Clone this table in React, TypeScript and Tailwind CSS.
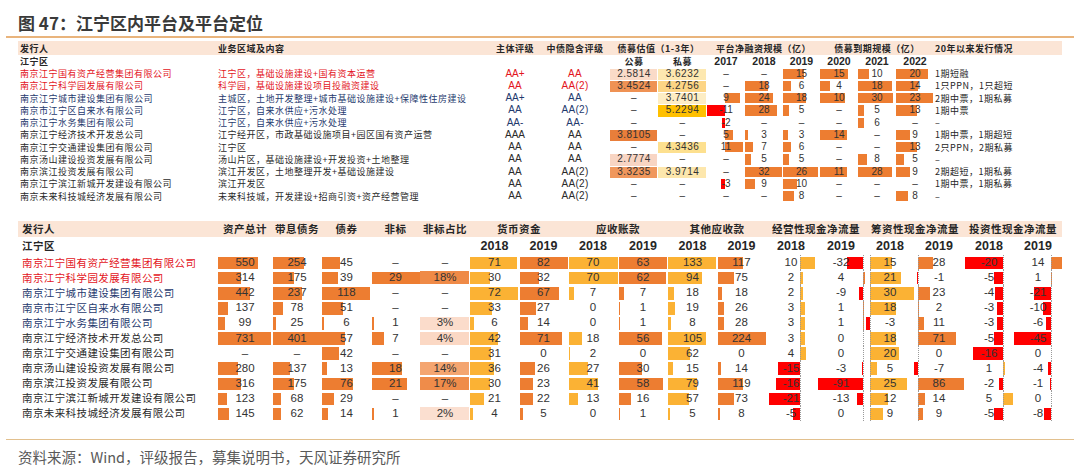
import React from 'react';

type Tone = 'red' | 'navy' | 'dark';
const toneClass = (t: Tone) =>
  t === 'red' ? 'text-[#e3141c]' : t === 'navy' ? 'text-[#1f3a6e]' : 'text-[#2a2a2a]';

const CJK = "font-['Noto_Sans_CJK_SC',sans-serif]";
const NUM = "font-['Liberation_Sans_Narrow','Liberation_Sans','Noto_Sans_CJK_SC',sans-serif]";

const TOP_GRID = 'grid grid-cols-[198px_274px_50px_70px_48px_49px_38px_38px_37px_38px_38px_38px_128px]';
const BOT_GRID =
  'grid grid-cols-[200px_54px_50px_49px_49px_50px_49px_49px_50px_50px_49px_49px_50px_50px_48px_50px_50px_48px]';

type TopRow = {
  name: string;
  biz: string;
  r1: string;
  r2: string;
  pub: [string, string | null];
  pri: [string, string | null];
  y17: [string, number];
  bars: [string, number][];
  note: string;
  tone: Tone;
};

const topRows: TopRow[] = [
  { name: '南京江宁国有资产经营集团有限公司', biz: '江宁区，基础设施建设+国有资本运营', r1: 'AA+', r2: 'AA', pub: ['2.5814', '#fadbc8'], pri: ['3.6232', '#fde8b0'], y17: ['–', 0], bars: [['–', 0], ['15', 21], ['15', 28], ['10', 11], ['20', 32]], note: '1期短融', tone: 'red' },
  { name: '南京江宁科学园发展有限公司', biz: '科学园，基础设施建设项目投融资建设', r1: 'AA', r2: 'AA(2)', pub: ['3.4524', '#ef9254'], pri: ['4.2756', '#fdd585'], y17: ['–', 0], bars: [['18', 23], ['6', 8], ['4', 10], ['18', 34], ['14', 22]], note: '1只PPN，1只超短', tone: 'red' },
  { name: '南京江宁城市建设集团有限公司', biz: '主城区，土地开发整理+城市基础设施建设+保障性住房建设', r1: 'AA+', r2: 'AA', pub: ['–', null], pri: ['3.7401', '#fdedc4'], y17: ['9', 15], bars: [['24', 28], ['18', 23], ['10', 25], ['30', 35], ['23', 37]], note: '2期中票，1期私募', tone: 'navy' },
  { name: '南京市江宁区自来水有限公司', biz: '江宁区，自来水供应+污水处理', r1: 'AA', r2: 'AA(2)', pub: ['–', null], pri: ['5.2294', '#ffc000'], y17: ['-11', -18], bars: [['28', 32], ['5', 6], ['–', 0], ['5', 6], ['13', 21]], note: '1期中票', tone: 'navy' },
  { name: '南京江宁水务集团有限公司', biz: '江宁区，自来水供应+污水处理', r1: 'AA-', r2: 'AA-', pub: ['–', null], pri: ['–', null], y17: ['-2', -3], bars: [['–', 0], ['–', 0], ['–', 0], ['6', 6], ['–', 0]], note: '–', tone: 'navy' },
  { name: '南京江宁经济技术开发总公司', biz: '江宁经开区，市政基础设施项目+园区国有资产运营', r1: 'AAA', r2: 'AA', pub: ['3.8105', '#e97e3a'], pri: ['–', null], y17: ['5', 8], bars: [['3', 3], ['3', 5], ['14', 27], ['–', 0], ['9', 14]], note: '1期中票，1期超短', tone: 'dark' },
  { name: '南京江宁交通建设集团有限公司', biz: '江宁区', r1: 'AA', r2: 'AA', pub: ['–', null], pri: ['4.3436', '#fde08f'], y17: ['11', 18], bars: [['7', 8], ['6', 8], ['–', 0], ['–', 0], ['13', 21]], note: '2只PPN，2期私募', tone: 'dark' },
  { name: '南京汤山建设投资发展有限公司', biz: '汤山片区，基础设施建设+开发投资+土地整理', r1: 'AA', r2: 'AA', pub: ['2.7774', '#f8d5c3'], pri: ['–', null], y17: ['–', 0], bars: [['5', 6], ['5', 6], ['–', 0], ['8', 9], ['5', 8]], note: '–', tone: 'dark' },
  { name: '南京滨江投资发展有限公司', biz: '滨江开发区，土地整理开发+基础设施建设', r1: 'AA', r2: 'AA(2)', pub: ['3.3235', '#f0975c'], pri: ['3.9714', '#fde7ad'], y17: ['–', 0], bars: [['32', 37], ['26', 35], ['11', 27], ['28', 34], ['9', 14]], note: '2期超短，1期私募', tone: 'dark' },
  { name: '南京江宁滨江新城开发建设有限公司', biz: '滨江开发区', r1: 'AA', r2: 'AA(2)', pub: ['–', null], pri: ['–', null], y17: ['-3', -4], bars: [['9', 10], ['10', 14], ['–', 0], ['–', 0], ['–', 0]], note: '1期中票，1期私募', tone: 'dark' },
  { name: '南京未来科技城经济发展有限公司', biz: '未来科技城，开发建设+招商引资+资产经营管理', r1: 'AA', r2: 'AA(2)', pub: ['–', null], pri: ['–', null], y17: ['–', 0], bars: [['–', 0], ['8', 11], ['–', 0], ['–', 0], ['8', 12]], note: '–', tone: 'dark' },
];

type Col =
  | { kind: 'bar'; scale: number; start: number; color: 'o' | 'y' }
  | { kind: 'heat' }
  | { kind: 'flow'; axis: number; scale: number; color: 'o' | 'y' };

const cols: Col[] = [
  { kind: 'bar', scale: 0.0725, start: 0, color: 'o' },
  { kind: 'bar', scale: 0.122, start: 1, color: 'o' },
  { kind: 'bar', scale: 0.407, start: 0, color: 'o' },
  { kind: 'bar', scale: 1.655, start: 1, color: 'o' },
  { kind: 'heat' },
  { kind: 'bar', scale: 0.667, start: 0, color: 'y' },
  { kind: 'bar', scale: 0.585, start: 1, color: 'o' },
  { kind: 'bar', scale: 0.7, start: 1, color: 'y' },
  { kind: 'bar', scale: 0.762, start: 1, color: 'o' },
  { kind: 'bar', scale: 0.361, start: 0, color: 'y' },
  { kind: 'bar', scale: 0.214, start: 1, color: 'o' },
  { kind: 'flow', axis: 34, scale: 1.5, color: 'y' },
  { kind: 'flow', axis: 47, scale: 0.5, color: 'o' },
  { kind: 'flow', axis: 4, scale: 1.47, color: 'y' },
  { kind: 'flow', axis: 4, scale: 0.535, color: 'o' },
  { kind: 'flow', axis: 39, scale: 1.9, color: 'y' },
  { kind: 'flow', axis: 37, scale: 0.82, color: 'o' },
];

type BotRow = { name: string; tone: Tone; v: string[]; heat: string | null };

const botRows: BotRow[] = [
  { name: '南京江宁国有资产经营集团有限公司', tone: 'red', heat: null, v: ['550', '254', '45', '–', '–', '71', '82', '70', '63', '133', '117', '10', '-32', '15', '28', '-20', '14'] },
  { name: '南京江宁科学园发展有限公司', tone: 'red', heat: '#ef8a47', v: ['314', '175', '39', '29', '18%', '30', '32', '70', '62', '94', '75', '2', '4', '21', '-1', '-5', '1'] },
  { name: '南京江宁城市建设集团有限公司', tone: 'navy', heat: null, v: ['442', '237', '118', '–', '–', '72', '67', '7', '7', '18', '18', '2', '-9', '30', '23', '-4', '-21'] },
  { name: '南京市江宁区自来水有限公司', tone: 'navy', heat: null, v: ['137', '78', '51', '–', '–', '33', '27', '0', '1', '19', '26', '3', '1', '18', '2', '-3', '-10'] },
  { name: '南京江宁水务集团有限公司', tone: 'navy', heat: '#fbdccb', v: ['99', '25', '6', '1', '3%', '6', '14', '0', '1', '8', '28', '3', '1', '-3', '11', '-3', '-6'] },
  { name: '南京江宁经济技术开发总公司', tone: 'dark', heat: '#fbd8c4', v: ['731', '401', '57', '7', '4%', '42', '71', '18', '56', '105', '224', '3', '0', '18', '71', '-5', '-45'] },
  { name: '南京江宁交通建设集团有限公司', tone: 'dark', heat: null, v: ['–', '–', '42', '–', '–', '31', '0', '2', '0', '62', '0', '4', '0', '20', '0', '-16', '0'] },
  { name: '南京汤山建设投资发展有限公司', tone: 'dark', heat: '#f4a570', v: ['280', '137', '13', '18', '14%', '36', '26', '27', '30', '15', '14', '-15', '-3', '5', '-7', '1', '-4'] },
  { name: '南京滨江投资发展有限公司', tone: 'dark', heat: '#ef8c4a', v: ['316', '175', '76', '21', '17%', '30', '23', '41', '58', '79', '119', '-16', '-91', '25', '86', '-2', '-1'] },
  { name: '南京江宁滨江新城开发建设有限公司', tone: 'dark', heat: null, v: ['123', '68', '29', '–', '–', '21', '22', '13', '16', '57', '73', '-21', '-13', '12', '14', '5', '0'] },
  { name: '南京未来科技城经济发展有限公司', tone: 'dark', heat: '#fbdfd0', v: ['145', '62', '14', '1', '2%', '4', '5', '0', '1', '5', '8', '-5', '0', '9', '9', '-5', '-8'] },
];

function TopBarCell({ v, w, axis = 0 }: { v: string; w: number; axis?: number }) {
  return (
    <div className="relative flex items-center justify-center">
      {w !== 0 && (
        <div
          className={`absolute top-[1px] bottom-[1px] ${w < 0 ? 'bg-[#ff0000]' : 'bg-[#ed7d31]'}`}
          style={{ left: w < 0 ? axis + w : axis, width: Math.abs(w) }}
        />
      )}
      <span className="relative">{v}</span>
    </div>
  );
}

function HeatCell({ v, bg }: { v: string; bg: string | null }) {
  return (
    <div className="relative flex items-center justify-center">
      {bg && <div className="absolute top-[1px] bottom-0 left-0 right-[1px]" style={{ background: bg }} />}
      <span className="relative">{v}</span>
    </div>
  );
}

function BotCell({ col, v, heat }: { col: Col; v: string; heat: string | null }) {
  const n = Number(v);
  const has = v !== '–' && !Number.isNaN(n);
  let bar: React.ReactNode = null;
  let axisLine: React.ReactNode = null;
  if (col.kind === 'heat') {
    if (heat) bar = <div className="absolute top-[1px] bottom-[1px] left-0 right-[1px]" style={{ background: heat }} />;
  } else if (col.kind === 'bar') {
    if (has && n > 0) {
      bar = (
        <div
          className={`absolute top-[1.5px] bottom-[1px] ${col.color === 'y' ? 'bg-[#fbb234]' : 'bg-[#ed7d31]'}`}
          style={{ left: col.start, width: Math.max(1, n * col.scale) }}
        />
      );
    }
  } else {
    axisLine = (
      <div className="absolute top-0 bottom-0 w-0 border-l border-dotted border-[#9a9a9a]" style={{ left: col.axis }} />
    );
    if (has && n !== 0) {
      const w = Math.max(1, Math.abs(n) * col.scale);
      bar = (
        <div
          className={`absolute top-[1.5px] bottom-[1px] ${
            n < 0 ? 'bg-[#ff0000]' : col.color === 'y' ? 'bg-[#fbb234]' : 'bg-[#ed7d31]'
          }`}
          style={{ left: n < 0 ? col.axis - w : col.axis, width: w }}
        />
      );
    }
  }
  return (
    <div className="relative flex items-center justify-center">
      {bar}
      {axisLine}
      <span className="relative">{v}</span>
    </div>
  );
}

function TopTable() {
  return (
    <div className="ml-[18px] w-[1044px] mt-[3.5px]">
      <div className={`${TOP_GRID} h-[14px] bg-[#fbe5d6] ${CJK} text-[9px] tracking-[0.5px] font-bold text-[#262626] leading-none`}>
        <div className="flex items-center pl-[2px]">发行人</div>
        <div className="flex items-center pl-[2px]">业务区域及内容</div>
        <div className="flex items-center justify-center">主体评级</div>
        <div className="flex items-center justify-center">中债隐含评级</div>
        <div className="col-span-2 flex items-center justify-center">债募估值（1-3年）</div>
        <div className="col-span-3 flex items-center justify-center">平台净融资规模（亿）</div>
        <div className="col-span-3 flex items-center justify-center">债募到期规模（亿）</div>
        <div className="flex items-center pl-[1px]">20年以来发行情况</div>
      </div>
      <div className={`${TOP_GRID} h-[12.5px] leading-none text-[#262626]`}>
        <div className={`flex items-center pl-[2px] ${CJK} text-[9px] tracking-[0.5px] font-semibold`}>江宁区</div>
        <div />
        <div />
        <div />
        <div className={`flex items-center justify-center ${CJK} text-[9px] tracking-[0.5px] font-bold`}>公募</div>
        <div className={`flex items-center justify-center ${CJK} text-[9px] tracking-[0.5px] font-bold`}>私募</div>
        {['2017', '2018', '2019', '2020', '2021', '2022'].map((y) => (
          <div key={y} className={`flex items-center justify-center ${NUM} text-[10.5px] font-bold`}>
            {y}
          </div>
        ))}
        <div />
      </div>
      {topRows.map((r) => (
        <div key={r.name} className={`${TOP_GRID} h-[12.25px] leading-none`}>
          <div className={`flex items-center pl-[2px] ${CJK} text-[9px] tracking-[0.5px] ${toneClass(r.tone)}`}>{r.name}</div>
          <div className={`flex items-center pl-[2px] ${CJK} text-[9px] tracking-[0.5px] whitespace-nowrap ${toneClass(r.tone)}`}>{r.biz}</div>
          <div className={`flex items-center justify-center ${NUM} text-[10px] ${toneClass(r.tone)}`}>{r.r1}</div>
          <div className={`flex items-center justify-center ${NUM} text-[10px] tracking-[0.3px] ${toneClass(r.tone)}`}>{r.r2}</div>
          <div className={`${NUM} text-[10px] tracking-[0.5px] text-[#333] grid`}>
            <HeatCell v={r.pub[0]} bg={r.pub[1]} />
          </div>
          <div className={`${NUM} text-[10px] tracking-[0.5px] text-[#333] grid`}>
            <HeatCell v={r.pri[0]} bg={r.pri[1]} />
          </div>
          <div className={`${NUM} text-[10px] text-[#333] grid`}>
            <TopBarCell v={r.y17[0]} w={r.y17[1]} axis={18} />
          </div>
          {r.bars.map((b, i) => (
            <div key={i} className={`${NUM} text-[10px] text-[#333] grid`}>
              <TopBarCell v={b[0]} w={b[1]} />
            </div>
          ))}
          <div className={`flex items-center pl-[1px] ${CJK} text-[9px] tracking-[0.5px] text-[#262626] whitespace-nowrap`}>{r.note}</div>
        </div>
      ))}
    </div>
  );
}

function BottomTable() {
  const years = ['2018', '2019', '2018', '2019', '2018', '2019', '2018', '2019', '2018', '2019', '2018', '2019'];
  return (
    <div className="ml-[18px] w-[1044px] mt-[19px]">
      <div className={`${BOT_GRID} h-[16px] bg-[#fbe5d6] ${CJK} text-[10.5px] tracking-[0.5px] font-bold text-[#262626] leading-none`}>
        <div className="flex items-center pl-[4px]">发行人</div>
        <div className="flex items-center justify-center">资产总计</div>
        <div className="flex items-center justify-center">带息债务</div>
        <div className="flex items-center justify-center">债券</div>
        <div className="flex items-center justify-center">非标</div>
        <div className="flex items-center justify-center">非标占比</div>
        <div className="col-span-2 flex items-center justify-center">货币资金</div>
        <div className="col-span-2 flex items-center justify-center">应收账款</div>
        <div className="col-span-2 flex items-center justify-center">其他应收款</div>
        <div className="col-span-2 flex items-center justify-center">经营性现金净流量</div>
        <div className="col-span-2 flex items-center justify-center">筹资性现金净流量</div>
        <div className="col-span-2 flex items-center justify-center">投资性现金净流量</div>
      </div>
      <div className={`${BOT_GRID} h-[18px] leading-none text-[#262626]`}>
        <div className={`flex items-center pl-[4px] ${CJK} text-[10.5px] tracking-[0.5px] font-semibold`}>江宁区</div>
        <div />
        <div />
        <div />
        <div />
        <div />
        {years.map((y, i) => (
          <div key={i} className={`flex items-center justify-center ${NUM} text-[12.5px] font-bold`}>
            {y}
          </div>
        ))}
      </div>
      {botRows.map((r) => (
        <div key={r.name} className={`${BOT_GRID} h-[15.1px] leading-none`}>
          <div className={`flex items-center pl-[4px] ${CJK} text-[10.5px] tracking-[0.4px] ${toneClass(r.tone)}`}>{r.name}</div>
          {r.v.map((v, i) => (
            <div key={i} className={`${NUM} text-[11.5px] text-[#333] grid`}>
              <BotCell col={cols[i]} v={v} heat={r.heat} />
            </div>
          ))}
        </div>
      ))}
    </div>
  );
}

export default function App() {
  return (
    <div className="w-[1080px] h-[469px] bg-white overflow-hidden">
      <div className={`h-[36px] flex items-center pl-[18px] pt-[8px] ${CJK} text-[17px] font-bold text-[#3a3a3a] leading-none`}>
        图 47：江宁区内平台及平台定位
      </div>
      <div className="mx-[6px] h-[1.5px] bg-[#e9b47c]" />
      <TopTable />
      <BottomTable />
      <div className="mx-[6px] mt-[17.5px] h-[1.5px] bg-[#e2c08e]" />
      <div className={`h-[28px] flex items-center pl-[18px] pt-[5px] ${CJK} text-[14.5px] text-[#595959] leading-none`}>
        资料来源：Wind，评级报告，募集说明书，天风证券研究所
      </div>
    </div>
  );
}
